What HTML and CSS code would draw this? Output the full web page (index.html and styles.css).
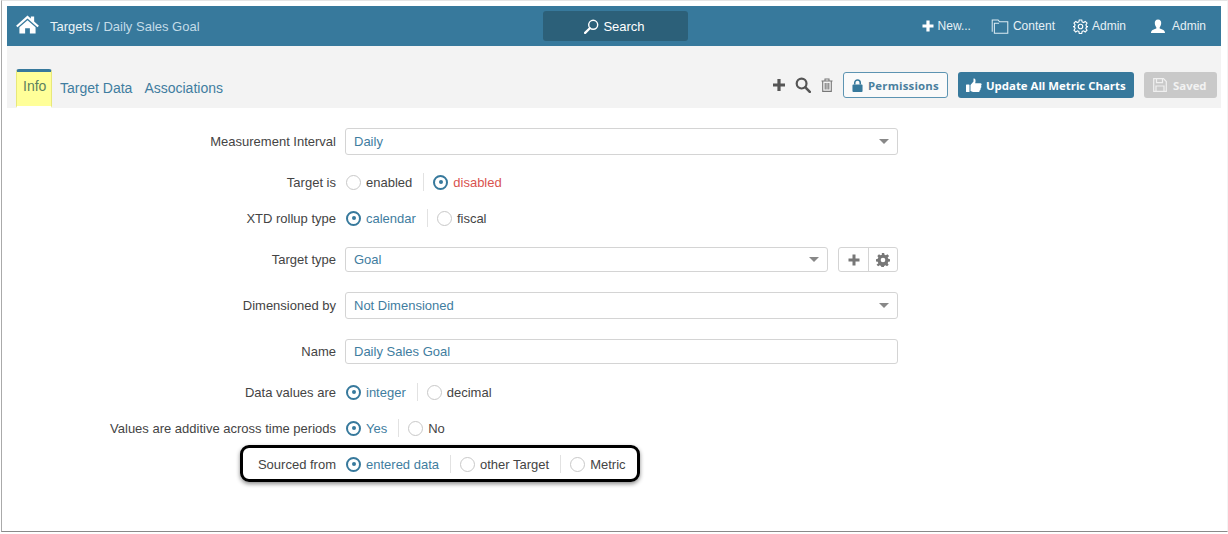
FILE: index.html
```html
<!DOCTYPE html>
<html lang="en">
<head>
<meta charset="utf-8">
<title>Daily Sales Goal</title>
<link rel="stylesheet" href="styles.css">
</head>
<body>
<div class="frame">
  <header class="topbar">
    <div class="crumbs">
      <svg class="home" viewBox="0 0 24 20" width="23" height="19"><path d="M12 0.5 L15.5 3.6 V1.5 H19 V6.8 L24 11.2 L22.5 12.8 L12 3.6 L1.5 12.8 L0 11.2 Z" fill="#fff"/><path d="M12 5.4 L20.5 12.8 V19.5 H14.5 V14 H9.5 V19.5 H3.5 V12.8 Z" fill="#fff"/></svg>
      <span class="crumb-root">Targets</span><span class="crumb-rest">&nbsp;/ Daily Sales Goal</span>
    </div>
    <div class="search">
      <svg viewBox="0 0 16 16" width="15" height="15"><circle cx="9.8" cy="6.2" r="4.8" fill="none" stroke="#fff" stroke-width="1.5"/><path d="M6.2 9.8 L1.2 14.8" stroke="#fff" stroke-width="2.4" stroke-linecap="round"/></svg>
      <span>Search</span>
    </div>
    <nav class="topnav">
      <span class="nav-item nav-new"><svg viewBox="0 0 12 12" width="12" height="12"><path d="M6 0.5 V11.5 M0.5 6 H11.5" stroke="#fff" stroke-width="3.2"/></svg>New...</span>
      <span class="nav-item nav-content"><svg viewBox="0 0 18 16" width="18" height="15"><path d="M0.7 13.5 V1 H7 L8.5 3 H17.3 V15.2 H3 V4.5 H8" fill="none" stroke="#dcebf2" stroke-width="1.1"/></svg>Content</span>
      <span class="nav-item nav-admin"><svg viewBox="0 0 24 24" width="15" height="15" fill="none" stroke="#fff" stroke-width="1.8"><circle cx="12" cy="12" r="3.6"/><path d="M10 1.5h4l.6 3.2 2.3 1 2.7-1.8 2.8 2.8-1.8 2.7 1 2.3 3.2.6v0h-.1l-3.1.6-1 2.3 1.8 2.7-2.8 2.8-2.7-1.8-2.3 1-.6 3.2h-4l-.6-3.2-2.3-1-2.7 1.8-2.8-2.8 1.8-2.7-1-2.3-3.1-.6h-.1l3.2-.6 1-2.3-1.8-2.7 2.8-2.8 2.7 1.8 2.3-1z"/></svg>Admin</span>
      <span class="nav-item nav-user"><svg viewBox="0 0 16 16" width="16" height="15"><path d="M8 0.5 C10.5 0.5 11.6 2.4 11.4 4.6 C11.3 6.4 10.6 7.8 9.8 8.8 V10 C11.5 10.8 15.5 11.3 15.5 14.8 H0.5 C0.5 11.3 4.5 10.8 6.2 10 V8.8 C5.4 7.8 4.7 6.4 4.6 4.6 C4.4 2.4 5.5 0.5 8 0.5 Z" fill="#fff"/></svg>Admin</span>
    </nav>
  </header>

  <div class="toolbar">
    <div class="tabs">
      <span class="tab tab-active">Info</span>
      <span class="tab">Target Data</span>
      <span class="tab">Associations</span>
    </div>
    <div class="actions">
      <svg class="act-plus" viewBox="0 0 14 14" width="14" height="14"><path d="M7 1 V13 M1 7 H13" stroke="#555" stroke-width="3.2"/></svg>
      <svg class="act-search" viewBox="0 0 16 16" width="16" height="16"><circle cx="6.6" cy="6.6" r="4.9" fill="none" stroke="#555" stroke-width="2.2"/><path d="M10.4 10.4 L14.8 14.8" stroke="#555" stroke-width="2.6" stroke-linecap="round"/></svg>
      <svg class="act-trash" viewBox="0 0 12 14" width="12" height="14" fill="none" stroke="#777" stroke-width="1.1"><path d="M0.5 3 H11.5 M4 3 V1 H8 V3 M1.7 3 V13.4 H10.3 V3 M4.2 5 V11.5 M6 5 V11.5 M7.8 5 V11.5"/></svg>
      <span class="btn btn-outline"><svg viewBox="0 0 12 14" width="11" height="13"><path d="M3 6 V4 A3 3 0 0 1 9 4 V6" fill="none" stroke="#37799c" stroke-width="1.7"/><rect x="0.5" y="6" width="11" height="8" rx="1" fill="#37799c"/></svg>Permissions</span>
      <span class="btn btn-primary"><svg viewBox="0 0 16 15" width="16" height="15"><rect x="0" y="6.5" width="3.5" height="7.5" rx="0.6" fill="#fff"/><path d="M4.5 7 L7.5 3.5 V0.6 C9.5 0.3 10 2.5 9.2 5.2 H14.3 C16 5.2 16 7.4 14.9 7.7 C15.8 8.4 15.4 9.9 14.5 10 C15 10.9 14.5 12 13.7 12.2 C13.9 13.2 13.3 14 12.3 14 H7 L4.5 13 Z" fill="#fff"/></svg>Update All Metric Charts</span>
      <span class="btn btn-disabled"><svg viewBox="0 0 14 14" width="14" height="14" fill="none" stroke="#f0f0f0" stroke-width="1.2"><path d="M0.7 0.7 H10.5 L13.3 3.5 V13.3 H0.7 Z M3.5 0.7 V4.6 H9.5 V0.7 M3 13.3 V8 H11 V13.3"/></svg>Saved</span>
    </div>
  </div>

  <form class="form">
    <div class="row row-first">
      <span class="label">Measurement Interval</span>
      <div class="select select-wide tall"><span>Daily</span><i class="caret"></i></div>
    </div>
    <div class="row gap-17">
      <span class="label">Target is</span>
      <div class="radios">
        <span class="radio"><i class="dot"></i><span class="plain">enabled</span></span>
        <span class="radio"><i class="dot on"></i><span class="danger">disabled</span></span>
      </div>
    </div>
    <div class="row gap-16">
      <span class="label">XTD rollup type</span>
      <div class="radios">
        <span class="radio"><i class="dot on"></i><span class="chosen">calendar</span></span>
        <span class="radio"><i class="dot"></i><span class="plain">fiscal</span></span>
      </div>
    </div>
    <div class="row gap-19">
      <span class="label">Target type</span>
      <div class="select select-mid"><span>Goal</span><i class="caret"></i></div>
      <div class="btn-group">
        <span class="group-btn"><svg viewBox="0 0 12 12" width="12" height="12"><path d="M6 .5 V11.5 M.5 6 H11.5" stroke="#777" stroke-width="3"/></svg></span>
        <span class="group-btn"><svg viewBox="0 0 24 24" width="14" height="14"><path fill="#777" fill-rule="evenodd" d="M10 1h4l.6 3 2.4 1 2.6-1.7 2.8 2.8L20 8.7l1 2.3 3 .6v4l-3 .5-1 2.4 1.7 2.6-2.8 2.8-2.6-1.7-2.4 1-.6 3h-4l-.6-3-2.4-1-2.6 1.7-2.8-2.8L4 18.5 3 16l-3-.5v-4l3-.6 1-2.3-1.7-2.6 2.8-2.8L7.7 5l2.4-1zM12 9a4 4 0 1 0 0 8 4 4 0 0 0 0-8z" transform="translate(0 -1)"/></svg></span>
      </div>
    </div>
    <div class="row gap-20">
      <span class="label">Dimensioned by</span>
      <div class="select select-wide tall"><span>Not Dimensioned</span><i class="caret"></i></div>
    </div>
    <div class="row gap-20">
      <span class="label">Name</span>
      <div class="text-input"><span>Daily Sales Goal</span></div>
    </div>
    <div class="row gap-18">
      <span class="label">Data values are</span>
      <div class="radios">
        <span class="radio"><i class="dot on"></i><span class="chosen">integer</span></span>
        <span class="radio"><i class="dot"></i><span class="plain">decimal</span></span>
      </div>
    </div>
    <div class="row gap-16">
      <span class="label">Values are additive across time periods</span>
      <div class="radios">
        <span class="radio"><i class="dot on"></i><span class="chosen">Yes</span></span>
        <span class="radio"><i class="dot"></i><span class="plain">No</span></span>
      </div>
    </div>
    <div class="row gap-16 row-callout">
      <span class="callout"></span>
      <span class="label">Sourced from</span>
      <div class="radios">
        <span class="radio"><i class="dot on"></i><span class="chosen">entered data</span></span>
        <span class="radio"><i class="dot"></i><span class="plain">other Target</span></span>
        <span class="radio"><i class="dot"></i><span class="plain">Metric</span></span>
      </div>
    </div>
  </form>
</div>
</body>
</html>
```
FILE: styles.css
```css
* { box-sizing: border-box; }
html, body { margin: 0; height: 100%; background: #fff; }
body { font-family: "Liberation Sans", Arial, sans-serif; font-size: 13px; color: #444; overflow: hidden; }

.frame {
  width: 1227px;
  height: 532px;
  margin-left: 1px;
  padding: 5px 6px 0 5px;
  border-top: 1px solid #e4e4e4;
  border-left: 1px solid #aaa;
  border-right: 1px solid #f4f4f4;
  border-bottom: 1px solid #8a8a8a;
}

.topbar {
  height: 40px;
  background: #37799c;
  display: grid;
  grid-template-columns: 536px 145px 1fr;
  align-items: center;
  color: #fff;
}
.crumbs { display: flex; align-items: center; padding-left: 9px; font-size: 13px; }
.home { margin-right: 11px; margin-top: -3px; }
.crumb-root { color: #eaf3f7; }
.crumb-rest { color: #c3dce8; }
.search {
  height: 30px;
  background: #2c6079;
  border-radius: 3px;
  display: flex;
  align-items: center;
  justify-content: center;
  gap: 4px;
  color: #fff;
  font-size: 13px;
}
.search svg { margin-left: -2px; }
.topnav { display: flex; justify-content: flex-end; align-items: center; padding-right: 15px; font-size: 12px; }
.nav-item { display: flex; align-items: center; color: #e6f0f5; }
.nav-new svg { margin-right: 4px; }
.nav-new { margin-right: 20px; }
.nav-content svg { margin-right: 4px; }
.nav-content { margin-right: 18px; }
.nav-admin svg { margin-right: 4px; }
.nav-admin { margin-right: 24px; }
.nav-user svg { margin-right: 6px; }

.toolbar {
  height: 62px;
  background: #f3f3f3;
  display: flex;
  justify-content: space-between;
  align-items: flex-end;
  padding: 0 4px 0 9px;
}
.tabs { display: flex; align-items: flex-end; gap: 6px; font-size: 14px; }
.tab { color: #3f7da0; padding: 0 6px 12px 0; line-height: 16px; }
.tab-active {
  height: 39px;
  width: 36px;
  margin-right: 2px;
  padding: 6px 0 0 6px;
  background: #ffff99;
  border: 1px solid #e8e87a;
  border-top: 3px solid #37799c;
  border-bottom: 2px solid #fff;
  border-radius: 3px 3px 0 0;
  color: #5c7f5f;
}
.actions { display: flex; align-items: center; height: 26px; margin-bottom: 10px; }
.act-plus { margin-right: 9px; }
.act-search { margin-right: 10px; }
.act-trash { margin-right: 10px; }
.btn {
  height: 26px;
  display: flex;
  align-items: center;
  border-radius: 3px;
  font-family: "Open Sans", sans-serif;
  font-weight: 700;
  font-size: 11.4px;
}
.btn-outline { width: 105px; border: 1px solid #5d94b2; color: #4a7f9e; padding-left: 8px; gap: 5px; margin-right: 10px; background: #fafafa; letter-spacing: .2px; }
.btn-primary { width: 176px; background: #37799c; color: #fff; padding-left: 8px; gap: 4px; margin-right: 10px; }
.btn-disabled { width: 73px; background: #c9c9c9; color: #f2f2f2; padding-left: 9px; gap: 6px; }

.form { display: flex; flex-direction: column; padding-top: 20px; }
.row { display: flex; align-items: center; min-height: 20px; }
.gap-16 { margin-top: 16px; }
.gap-17 { margin-top: 17px; }
.gap-18 { margin-top: 18px; }
.gap-19 { margin-top: 19px; }
.gap-20 { margin-top: 20px; }
.label { width: 329px; margin-right: 9px; text-align: right; color: #444; }
.row-callout { position: relative; }
.callout {
  position: absolute;
  left: 233px;
  top: -9px;
  width: 400px;
  height: 37px;
  border: 3px solid #000;
  border-radius: 9px;
  box-shadow: 0 2px 4px rgba(0,0,0,.45);
}

.select, .text-input {
  height: 25px;
  display: flex;
  align-items: center;
  justify-content: space-between;
  padding: 0 8px;
  border: 1px solid #d4d4d4;
  border-radius: 3px;
  background: #fff;
  color: #3f7da0;
}
.tall { height: 27px; }
.select-wide { width: 553px; }
.select-mid { width: 483px; }
.text-input { width: 553px; }
.caret { width: 0; height: 0; border-left: 5px solid transparent; border-right: 5px solid transparent; border-top: 5px solid #888; }
.btn-group { display: flex; height: 25px; margin-left: 10px; border: 1px solid #d4d4d4; border-radius: 3px; }
.group-btn { width: 29px; display: flex; align-items: center; justify-content: center; }
.group-btn + .group-btn { border-left: 1px solid #d4d4d4; }

.radios { display: flex; align-items: center; padding-left: 1px; }
.radio { display: flex; align-items: center; gap: 5px; }
.radio + .radio { margin-left: 11px; padding-left: 9px; border-left: 1px solid #e2e2e2; height: 18px; }
.dot {
  width: 15px;
  height: 15px;
  border-radius: 50%;
  border: 1.5px solid #c8c8c8;
  background: #fff;
  flex: none;
  position: relative;
}
.dot.on { border: 2px solid #37799c; }
.dot.on::after {
  content: "";
  position: absolute;
  left: 3.5px;
  top: 3.5px;
  width: 4px;
  height: 4px;
  border-radius: 50%;
  background: #37799c;
}
.plain { color: #444; }
.chosen { color: #3f7da0; }
.danger { color: #d9534f; }
```
